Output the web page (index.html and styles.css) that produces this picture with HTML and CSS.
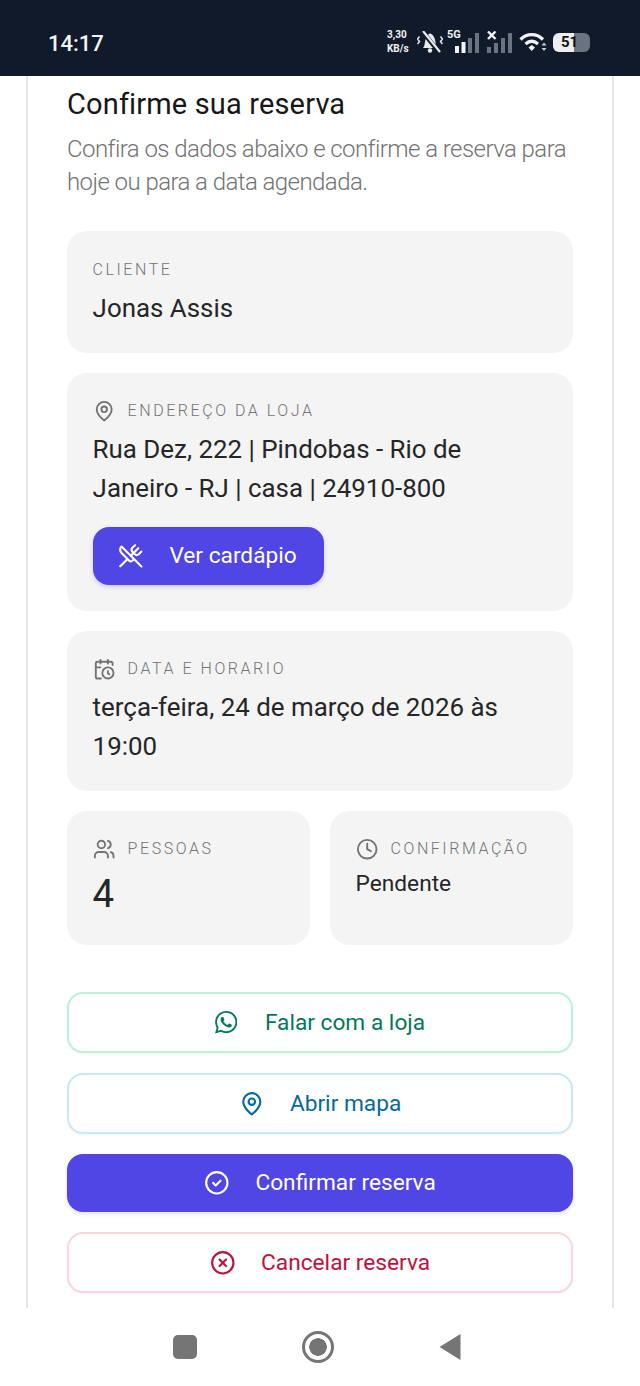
FILE: index.html
```html
<!DOCTYPE html>
<html lang="pt-BR">
<head>
  <meta charset="UTF-8">
  <meta name="viewport" content="width=device-width, initial-scale=1.0">
  <title>Confirme sua reserva</title>
  <link rel="stylesheet" href="styles.css">
</head>
<body>
  <!-- barra de status do celular -->
  <header class="status-bar">
    <span class="clock">14:17</span>
    <div class="status-icons">
      <span class="speed"><b>3,30</b><b>KB/s</b></span>
      <svg class="bell" width="26" height="22" viewBox="0 0 26 22" fill="none" stroke="#e8eaed" stroke-width="2">
        <path d="M6 17c2-2 1.500-5 2.500-8.500C9.500 5 11.500 2.500 13 2.500s4 2 5 6c.8 3.500.5 6.500 2.500 8.500z" fill="#e8eaed" stroke="none"/>
        <circle cx="13" cy="19.500" r="2.200" fill="#e8eaed" stroke="none"/>
        <path d="M5 0l17 21" stroke="#111a2b" stroke-width="4.500"/>
        <path d="M6 0l17 21" stroke-width="2.200"/>
        <path d="M2.500 5.500l-2 2.500 2 2.500-2 2.500M23.500 5.500l2 2.500-2 2.500 2 2.500" stroke-width="1.500"/>
      </svg>
      <span class="signal">
        <span class="net">5G</span>
        <svg width="24" height="20" viewBox="0 0 24 20">
          <rect x="0" y="13" width="4" height="7" fill="#f2f3f5"/>
          <rect x="6.500" y="9" width="4" height="11" fill="#f2f3f5"/>
          <rect x="13" y="5" width="4" height="15" fill="#6b7280"/>
          <rect x="20" y="0" width="4" height="20" fill="#6b7280"/>
        </svg>
      </span>
      <span class="signal second">
        <svg width="25" height="22" viewBox="0 0 25 22">
          <path d="M1 .500l7.500 7.500M8.500 .500 1 8" stroke="#f2f3f5" stroke-width="2.400"/>
          <rect x="0" y="16" width="4" height="6" fill="#6b7280"/>
          <rect x="7" y="12" width="4" height="10" fill="#6b7280"/>
          <rect x="14" y="7" width="4" height="15" fill="#6b7280"/>
          <rect x="21" y="2" width="4" height="20" fill="#6b7280"/>
        </svg>
      </span>
      <svg class="wifi" width="28" height="20" viewBox="0 0 28 20" fill="none" stroke="#f2f3f5" stroke-width="3.200">
        <path d="M1.500 7.500c6.500-6.500 16-6.500 22.500 0"/>
        <path d="M6.500 12c4-3.500 8.500-3.500 12.500 0"/>
        <path d="M9.500 15.500l3.250-2.500 3.250 2.500-3.250 3.500z" fill="#f2f3f5" stroke="none"/>
        <path d="M25 10.500l2.500 3h-5zM25 19l2.500-3h-5z" fill="#c9ccd1" stroke="none"/>
      </svg>
      <span class="battery"><span class="battery-level">51</span></span>
    </div>
  </header>

  <main class="panel">
    <h1 class="title">Confirme sua reserva</h1>
    <p class="subtitle">Confira os dados abaixo e confirme a reserva para hoje ou para a data agendada.</p>

    <div class="cards">
      <section class="card">
        <div class="label">CLIENTE</div>
        <div class="value">Jonas Assis</div>
      </section>

      <section class="card">
        <div class="label">
          <svg class="icon" viewBox="0 0 24 24"><path d="M20 10c0 6-8 12-8 12s-8-6-8-12a8 8 0 0 1 16 0Z"/><circle cx="12" cy="10" r="3"/></svg>
          ENDEREÇO DA LOJA
        </div>
        <div class="value">Rua Dez, 222 | Pindobas - Rio de Janeiro - RJ | casa | 24910-800</div>
        <a class="menu-btn">
          <svg class="icon" viewBox="0 0 24 24"><path d="m16 2-2.300 2.300a3 3 0 0 0 0 4.200l1.800 1.800a3 3 0 0 0 4.200 0L22 8"/><path d="M15 15 3.300 3.300a4.200 4.200 0 0 0 0 6l7.300 7.300c.7.7 2 .7 2.800 0L15 15Zm0 0 7 7"/><path d="m2.100 21.800 6.400-6.300"/><path d="m19 5-7 7"/></svg>
          Ver cardápio
        </a>
      </section>

      <section class="card">
        <div class="label">
          <svg class="icon" viewBox="0 0 24 24"><path d="M21 7.500V6a2 2 0 0 0-2-2H5a2 2 0 0 0-2 2v14a2 2 0 0 0 2 2h3.500"/><path d="M16 2v4"/><path d="M8 2v4"/><path d="M3 10h5"/><path d="M17.500 17.500 16 16.300V14"/><circle cx="16" cy="16" r="6"/></svg>
          DATA E HORARIO
        </div>
        <div class="value">terça-feira, 24 de março de 2026 às 19:00</div>
      </section>

      <div class="card-row">
        <section class="card">
          <div class="label">
            <svg class="icon" viewBox="0 0 24 24"><path d="M16 21v-2a4 4 0 0 0-4-4H6a4 4 0 0 0-4 4v2"/><circle cx="9" cy="7" r="4"/><path d="M22 21v-2a4 4 0 0 0-3-3.870"/><path d="M16 3.130a4 4 0 0 1 0 7.750"/></svg>
            PESSOAS
          </div>
          <div class="value-big">4</div>
        </section>
        <section class="card">
          <div class="label">
            <svg class="icon" viewBox="0 0 24 24"><circle cx="12" cy="12" r="10"/><path d="M12 6v6l4 2"/></svg>
            CONFIRMAÇÃO
          </div>
          <div class="value-small">Pendente</div>
        </section>
      </div>
    </div>

    <div class="actions">
      <a class="btn btn-green">
        <svg class="brand" viewBox="0 0 24 24"><path d="M17.472 14.382c-.297-.149-1.758-.867-2.030-.967-.273-.099-.471-.148-.670.150-.197.297-.767.966-.940 1.164-.173.199-.347.223-.644.075-.297-.150-1.255-.463-2.390-1.475-.883-.788-1.480-1.761-1.653-2.059-.173-.297-.018-.458.130-.606.134-.133.298-.347.446-.520.149-.174.198-.298.298-.497.099-.198.050-.371-.025-.520-.075-.149-.669-1.612-.916-2.207-.242-.579-.487-.500-.669-.510-.173-.008-.371-.010-.570-.010-.198 0-.520.074-.792.372-.272.297-1.040 1.016-1.040 2.479 0 1.462 1.065 2.875 1.213 3.074.149.198 2.096 3.200 5.077 4.487.709.306 1.262.489 1.694.625.712.227 1.360.195 1.871.118.571-.085 1.758-.719 2.006-1.413.248-.694.248-1.289.173-1.413-.074-.124-.272-.198-.570-.347m-5.421 7.403h-.004a9.870 9.870 0 01-5.031-1.378l-.361-.214-3.741.982.998-3.648-.235-.374a9.860 9.860 0 01-1.510-5.260c.001-5.450 4.436-9.884 9.888-9.884 2.640 0 5.122 1.030 6.988 2.898a9.825 9.825 0 012.893 6.994c-.003 5.450-4.437 9.884-9.885 9.884m8.413-18.297A11.815 11.815 0 0012.050 0C5.495 0 .160 5.335.157 11.892c0 2.096.547 4.142 1.588 5.945L.057 24l6.305-1.654a11.882 11.882 0 005.683 1.448h.005c6.554 0 11.890-5.335 11.893-11.893a11.821 11.821 0 00-3.480-8.413z"/></svg>
        Falar com a loja
      </a>
      <a class="btn btn-blue">
        <svg class="icon" viewBox="0 0 24 24"><path d="M20 10c0 6-8 12-8 12s-8-6-8-12a8 8 0 0 1 16 0Z"/><circle cx="12" cy="10" r="3"/></svg>
        Abrir mapa
      </a>
      <a class="btn btn-primary">
        <svg class="icon" viewBox="0 0 24 24"><circle cx="12" cy="12" r="10"/><path d="m8.500 12 2.500 2.500 4.500-4.500"/></svg>
        Confirmar reserva
      </a>
      <a class="btn btn-red">
        <svg class="icon" viewBox="0 0 24 24"><circle cx="12" cy="12" r="10"/><path d="m15 9-6 6"/><path d="m9 9 6 6"/></svg>
        Cancelar reserva
      </a>
    </div>
  </main>

  <!-- botões de navegação do android -->
  <nav class="nav-bar">
    <span class="nav-square"></span>
    <span class="nav-circle"></span>
    <svg class="nav-back" width="22" height="28" viewBox="0 0 22 28"><path d="M0.500 14 21.500 1v26z" fill="#757575"/></svg>
  </nav>
</body>
</html>
```

FILE: styles.css
```css
* {
  box-sizing: border-box;
}

html, body {
  margin: 0;
  height: 1386px;
  overflow: hidden;
  background: #fff;
}

body {
  display: flex;
  flex-direction: column;
  font-family: Roboto, "Liberation Sans", sans-serif;
  color: #171717;
}

.status-bar {
  flex: 0 0 76px;
  display: flex;
  align-items: center;
  justify-content: space-between;
  padding: 10px 50px 0 48px;
  background: #111a2b;
  color: #f2f3f5;
}

.clock {
  font-size: 22px;
  font-weight: 500;
}

.status-icons {
  display: flex;
  align-items: center;
  margin-top: -2px;
}

.speed {
  display: flex;
  flex-direction: column;
  width: 30px;
  font-size: 10px;
  line-height: 14px;
}

.signal {
  position: relative;
  display: flex;
  align-items: flex-end;
  height: 22px;
  margin-left: 12px;
}

.signal.second {
  margin-left: 8px;
}

.net {
  position: absolute;
  left: -8px;
  top: -3px;
  font-size: 11px;
  font-weight: 700;
}

.wifi {
  margin-left: 7px;
}

.battery {
  position: relative;
  width: 37px;
  height: 19px;
  margin-left: 6px;
  border-radius: 6px;
  background: linear-gradient(to right, #eceef0 56%, #6b7280 56%);
}

.battery-level {
  position: absolute;
  left: 0;
  right: 4px;
  top: 0;
  color: #111;
  font-size: 15px;
  font-weight: 700;
  line-height: 19px;
  text-align: center;
}

.panel {
  flex: 1;
  min-height: 0;
  overflow: hidden;
  width: 588px;
  margin-left: 26px;
  padding: 8px 39px 0;
  border-left: 2px solid #e5e7eb;
  border-right: 2px solid #e5e7eb;
}

.title {
  margin: 0;
  font-size: 29px;
  font-weight: 400;
  line-height: 40px;
  letter-spacing: .15px;
  color: #171717;
}

.subtitle {
  margin: 9px 0 32px;
  font-size: 24px;
  font-weight: 300;
  line-height: 33px;
  letter-spacing: -.56px;
  color: #737373;
}

.cards {
  display: flex;
  flex-direction: column;
  gap: 20px;
}

.card {
  padding: 25.600px;
  border-radius: 20px;
  background: #f4f4f5;
}

.card-row {
  display: grid;
  grid-template-columns: 1fr 1fr;
  gap: 20px;
}

.label {
  display: flex;
  align-items: center;
  gap: 12.600px;
  margin-bottom: 6.400px;
  font-size: 16px;
  font-weight: 300;
  line-height: 25.600px;
  letter-spacing: 2.550px;
  color: #737373;
}

.icon {
  flex: none;
  width: 22.400px;
  height: 22.400px;
  fill: none;
  stroke: currentColor;
  stroke-width: 2;
  stroke-linecap: round;
  stroke-linejoin: round;
}

.menu-btn .icon,
.btn .icon {
  width: 25.600px;
  height: 25.600px;
}

.brand {
  flex: none;
  width: 22.400px;
  height: 22.400px;
  margin-right: 2px;
  fill: currentColor;
}

.value {
  font-size: 25.900px;
  line-height: 38.400px;
  color: #262626;
}

.value-big {
  font-size: 38.400px;
  line-height: 51.200px;
  color: #262626;
}

.value-small {
  font-size: 22.700px;
  line-height: 32px;
  color: #262626;
}

.menu-btn {
  display: inline-flex;
  align-items: center;
  gap: 25.600px;
  height: 58px;
  margin-top: 20px;
  padding: 0 27px 0 25.600px;
  border-radius: 16px;
  background: #4f46e5;
  box-shadow: 0 2px 4px rgba(79, 70, 229, .25);
  color: #fff;
  font-size: 22.700px;
}

.actions {
  display: flex;
  flex-direction: column;
  gap: 20px;
  margin-top: 47px;
}

.btn {
  display: flex;
  align-items: center;
  justify-content: center;
  gap: 25.600px;
  height: 61px;
  border: 2px solid;
  border-radius: 16px;
  background: #fff;
  font-size: 22.700px;
  box-shadow: 0 1px 2px rgba(0, 0, 0, .05);
}

.btn-green {
  border-color: #b9f2d8;
  color: #047857;
}

.btn-blue {
  border-color: #c6e9f9;
  color: #0369a1;
}

.btn-primary {
  height: 58px;
  border: 0;
  background: #4f46e5;
  color: #fff;
  box-shadow: 0 2px 4px rgba(0, 0, 0, .12);
}

.btn-red {
  border-color: #fbd5da;
  color: #be123c;
}

.nav-bar {
  flex: 0 0 78px;
  display: flex;
  align-items: center;
  justify-content: center;
  gap: 105px;
  padding-right: 6px;
  background: #fff;
}

.nav-square {
  width: 24px;
  height: 24px;
  border-radius: 5px;
  background: #757575;
}

.nav-circle {
  width: 32px;
  height: 32px;
  border: 3px solid #757575;
  border-radius: 50%;
  background: radial-gradient(circle, #757575 0 8.500px, #fff 9px);
}

.nav-back {
  display: block;
}
```
